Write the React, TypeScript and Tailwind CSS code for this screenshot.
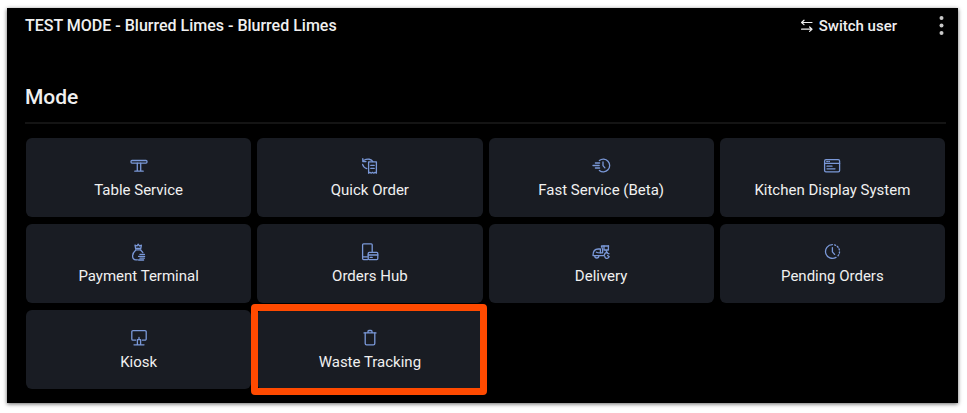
import type { ReactNode } from "react";

type Mode = {
    label: string;
    icon: ReactNode;
    highlighted?: boolean;
};

const MODES: Mode[] = [
    {
        label: "Table Service",
        icon: (
            <>
                <rect x="2" y="4.5" width="16" height="2.6" rx="1" />
                <path d="M8.3 7.1v8M11.7 7.1v8M5.8 15.2h8.4" />
            </>
        ),
    },
    {
        label: "Quick Order",
        icon: (
            <>
                <path d="M8.6 5.8h7.8v11.4l-1.3-.9-1.3.9-1.3-.9-1.3.9-1.3-.9-1.3.9z" />
                <path d="M10.8 9.4h3.4M10.8 12.4h3.4" />
                <path d="M12.8 5.6C11.6 3 7.4 2.4 4 4.2M2.8 2.6v3h3.2M2.6 8.4c.6 2.2 2 3.6 4.2 4.2" />
            </>
        ),
    },
    {
        label: "Fast Service (Beta)",
        icon: (
            <>
                <path d="M8.4 4.6A6.3 6.3 0 1 1 8.4 14.4" />
                <path d="M12 6v3.6l1.9 2.2M4.4 7h4.2M2 9.5h6.2M4.4 12h4.2" />
            </>
        ),
    },
    {
        label: "Kitchen Display System",
        icon: (
            <>
                <rect x="2.6" y="3.6" width="15" height="12.2" rx="1.4" />
                <path d="M2.6 7.4h15M5 10.2h5M5 12.8h8" />
                <path d="M4.8 5.5h.6M6.8 5.5h.6" />
            </>
        ),
    },
    {
        label: "Payment Terminal",
        icon: (
            <>
                <path d="M6.6 6.4 6 3.2l2 .8L9.2 2.2l1.2 1.8 2-.8-.6 3.2zM6.6 7.9h5.2" />
                <path d="M6.6 8.2C4.5 10 3.6 12 3.6 14c0 2.4 1.4 3.8 3.4 3.8h1.4M11.8 8.2c.9.8 1.6 1.5 2 2.4" />
                <path d="M11 12.4h4.4M9.6 14.4h6M11 16.2h4.4M9.6 18h5" />
            </>
        ),
    },
    {
        label: "Orders Hub",
        icon: (
            <>
                <path d="M7.6 17.6H3.6a1 1 0 0 1-1-1V2.8a1 1 0 0 1 1-1h7.6a1 1 0 0 1 1 1v6.6M2.6 14.8h5" />
                <rect x="8.2" y="10.4" width="9.6" height="7.2" rx="1" />
                <path d="M8.2 13h9.6M10.2 15.4h2" />
            </>
        ),
    },
    {
        label: "Delivery",
        icon: (
            <>
                <path d="M2 13.6c0-4 1.8-6.6 5.2-6.6h2.2v3.8h2.2V7.4L10.4 4h7.2M2 13.6h11.2c.2-1.8 1.2-3 3.2-3.2" />
                <path d="M5.4 10.2c1 .6 2.4.6 4 .6M13 4v4h4.4V4M14.8 8l1.4 3 1.8.8" />
                <path d="M3.8 14a2 2 0 0 0 4 0M13.8 14.4a2 2 0 0 0 3.6 1.2M16.6 13.4l1.6 1.4" />
            </>
        ),
    },
    {
        label: "Pending Orders",
        icon: (
            <>
                <path d="M10.4 2.6a6.9 6.9 0 1 0 3.6 12.8" />
                <path d="M12.6 2.9A6.9 6.9 0 0 1 15.4 14.5" strokeDasharray="1.2 1.8" />
                <path d="M10.4 5.6v4.2l2.2 2.6" />
            </>
        ),
    },
    {
        label: "Kiosk",
        icon: (
            <>
                <path d="M6.6 12.2H4a1.2 1.2 0 0 1-1.2-1.2V3.8A1.2 1.2 0 0 1 4 2.6h12a1.2 1.2 0 0 1 1.2 1.2V11a1.2 1.2 0 0 1-1.2 1.2h-2.6" />
                <path d="M8.4 16.6v-5h3.2v5M10 9.4v2M5 16.8h10" />
            </>
        ),
    },
    {
        label: "Waste Tracking",
        icon: (
            <>
                <path d="M4 4.9h12M8 4.6V3.4a.9.9 0 0 1 .9-.9h2.2a.9.9 0 0 1 .9.9v1.2" />
                <path d="M5.2 4.9v10.5c0 .8.6 1.4 1.4 1.4h6.8c.8 0 1.4-.6 1.4-1.4V4.9" />
            </>
        ),
        highlighted: true,
    },
];

function ModeCard({ label, icon, highlighted }: Mode) {
    return (
        <button type="button" className="relative flex flex-col items-center rounded-md bg-[#191c23] pt-[18px] pb-[15px]">
            <svg viewBox="0 0 20 20" fill="none" stroke="#7a98d8" strokeWidth="1.3" strokeLinecap="round" strokeLinejoin="round" className="size-5" aria-hidden="true">
                {icon}
            </svg>
            <span className="mt-0.5 text-[15px] leading-6">{label}</span>
            {highlighted && (
                <span className="pointer-events-none absolute -top-1.5 -right-1 -bottom-1.5 -left-1.5 rounded-sm border-[7px] border-[#ff4a00]" />
            )}
        </button>
    );
}

export default function App() {
    return (
        <div className="bg-white pt-2 pr-[9px] pb-[10px] pl-[7px] font-[Roboto,sans-serif] text-[#f0f0f0]">
            <div className="bg-black pr-3 pb-[14px] pl-[18px] shadow-[0_1px_4px_rgba(0,0,0,0.6)]">
                {/* Top bar */}
                <header className="flex h-9 items-center justify-between">
                    <span className="text-base font-medium">TEST MODE - Blurred Limes - Blurred Limes</span>
                    <div className="flex items-center gap-10">
                        <button type="button" className="flex items-center gap-1 text-[15px] font-medium">
                            <svg viewBox="0 0 16 16" fill="none" stroke="currentColor" strokeWidth="1.2" strokeLinecap="round" strokeLinejoin="round" className="size-4" aria-hidden="true">
                                <path d="M13 4.5H2.6M5 2.2 2.6 4.5 5 6.6M2.6 11.2H13M10.6 9 13 11.2l-2.4 2.2" />
                            </svg>
                            Switch user
                        </button>
                        <button type="button" aria-label="More options" className="flex h-6 w-[9px] items-center">
                            <svg viewBox="0 0 9 24" fill="#c8c8c8" className="h-6 w-[9px]" aria-hidden="true">
                                <circle cx="4.5" cy="4" r="2" />
                                <circle cx="4.5" cy="11.5" r="2" />
                                <circle cx="4.5" cy="19" r="2" />
                            </svg>
                        </button>
                    </div>
                </header>

                <main>
                    <h1 className="border-b-2 border-[#141414] pt-[39px] pb-[11px] text-[21px] leading-7 font-medium">Mode</h1>
                    <div className="mt-3.5 grid grid-cols-4 gap-x-1.5 gap-y-[7px] px-px">
                        {MODES.map((mode) => (
                            <ModeCard key={mode.label} {...mode} />
                        ))}
                    </div>
                </main>
            </div>
        </div>
    );
}
